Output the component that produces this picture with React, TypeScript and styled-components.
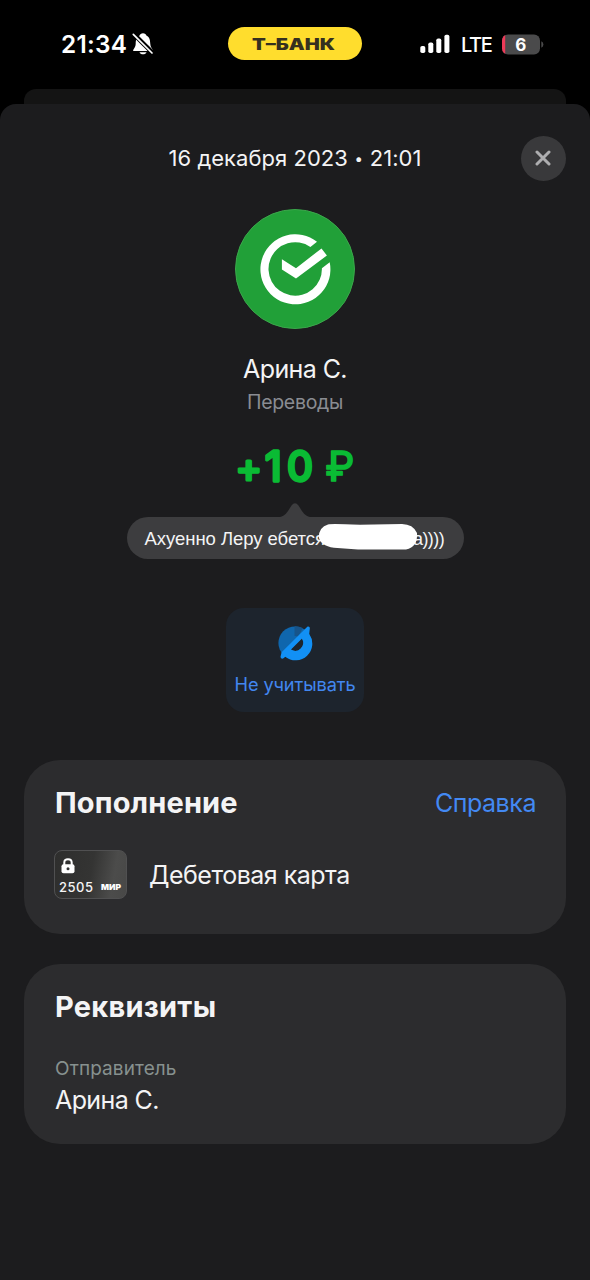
import React from 'react';
import styled, { createGlobalStyle } from 'styled-components';

const GlobalStyle = createGlobalStyle`
  * { box-sizing: border-box; }
  html, body { margin: 0; background: #000; }
  body { font-family: Inter, "Liberation Sans", sans-serif; color: #f4f4f5; }
  svg { display: block; flex: none; }
`;

const Screen = styled.main`
  width: 590px;
  height: 1280px;
  display: flex;
  flex-direction: column;
  overflow: hidden;
  background: #000;
`;

const StatusBar = styled.header`
  height: 89px;
  flex: none;
  display: grid;
  grid-template-columns: 228px 134px 228px;
  align-items: start;
`;

const StatusSide = styled.div<{ $pad: number }>`
  height: 88px;
  padding-left: ${(p) => p.$pad}px;
  display: flex;
  align-items: center;
`;

const Brand = styled.div`
  height: 33px;
  margin-top: 27px;
  border-radius: 17px;
  background: #ffdd2d;
  display: flex;
  align-items: center;
  justify-content: center;
`;

const BackSheet = styled.div`
  height: 15px;
  flex: none;
  margin: 0 24px;
  border-radius: 12px 12px 0 0;
  background: #141414;
`;

const Sheet = styled.section`
  flex: 1;
  border-radius: 16px 16px 0 0;
  background: #1c1c1e;
  display: flex;
  flex-direction: column;
  align-items: center;
`;

const Label = styled.span<{
  $size: number;
  $line: number;
  $weight?: number;
  $color?: string;
  $track?: number;
}>`
  display: block;
  white-space: nowrap;
  font-size: ${(p) => p.$size}px;
  line-height: ${(p) => p.$line}px;
  font-weight: ${(p) => p.$weight ?? 400};
  color: ${(p) => p.$color ?? '#f4f4f5'};
  letter-spacing: ${(p) => p.$track ?? 0}px;
`;

const BrandText = styled(Label)`
  transform: scaleX(1.27);
  padding: 2px 2px 0 0;
`;

const Network = styled(Label)`
  margin: 1px 11px 0 10px;
`;

const Dot = styled.span`
  font-size: 15px;
  vertical-align: 2px;
  margin: 0 0.5px;
`;

const TopRow = styled.div`
  width: 100%;
  height: 46px;
  margin-top: 31px;
  padding: 0 24px;
  display: grid;
  grid-template-columns: 46px 1fr 46px;
  align-items: center;
  justify-items: center;
`;

const CloseButton = styled.button`
  width: 45px;
  height: 45px;
  padding: 0;
  border: 0;
  border-radius: 50%;
  background: #39393b;
  display: grid;
  place-items: center;
`;

const Avatar = styled.div`
  width: 120px;
  height: 120px;
  flex: none;
  margin: 28px 0 24px;
  border-radius: 50%;
  border: 1px solid #3ba64b;
  background: #21a038;
`;

const Category = styled(Label)`
  margin-top: 4px;
`;

const Amount = styled.svg`
  margin-top: 17px;
`;

const Comment = styled.div`
  display: flex;
  flex-direction: column;
  align-items: center;
  margin-top: 10px;
`;

const Bubble = styled.div`
  position: relative;
  width: 337px;
  height: 42px;
  padding: 2px 0 0 18px;
  border-radius: 21px;
  background: #3d3d3f;
  display: flex;
  align-items: center;
  font-family: "Liberation Sans", Arial, sans-serif;
`;

const CommentTail = styled(Label)`
  margin-left: 88px;
`;

const Scribble = styled.svg`
  position: absolute;
  left: 191px;
  top: 6px;
`;

const Action = styled.button`
  width: 138px;
  height: 104px;
  flex: none;
  margin-top: 49px;
  padding: 17px 0 0;
  border: 0;
  border-radius: 18px;
  background: #1d242d;
  font-family: inherit;
  display: flex;
  flex-direction: column;
  align-items: center;
  gap: 11px;
`;

const Card = styled.article<{ $height: number; $top: number }>`
  width: 542px;
  height: ${(p) => p.$height}px;
  flex: none;
  margin-top: ${(p) => p.$top}px;
  padding: 25px 30px 0;
  border-radius: 36px;
  background: #2c2c2e;
`;

const CardHead = styled.div`
  display: flex;
  justify-content: space-between;
  align-items: center;
  height: 36px;
  padding-left: 1px;
`;

const Account = styled.div`
  display: flex;
  align-items: center;
  gap: 22px;
  margin-top: 28px;
  height: 50px;
`;

const AccountName = styled(Label)`
  padding-top: 2px;
`;

const BankCard = styled.div`
  width: 73px;
  height: 49px;
  padding: 7px 4px 0 4px;
  border-radius: 8px;
  border: 1px solid #505051;
  background: linear-gradient(100deg, #2e2e2d 0%, #343433 50%, #4c4c4b 80%, #484847 100%);
`;

const CardNumber = styled.div`
  display: flex;
  justify-content: space-between;
  align-items: center;
  margin-top: 5px;
`;

const Field = styled.div`
  display: grid;
  gap: 2px;
  margin-top: 31px;
  padding-left: 1px;
`;

const BellOff = () => (
  <svg width="22" height="24" viewBox="0 0 22 24" style={{ marginLeft: 5 }}>
    <path
      fill="#fff"
      d="M1 18.2C2 16.7 3.6 14.8 3.7 12C3.8 7.5 4.5 5.4 7.4 3.8C8 2 9.2 1.2 11 1.2C12.9 1.2 14 2.2 14.6 3.8C17.5 5.2 18.1 7.7 18.3 12C18.4 14.8 20 16.4 20.8 18.2Q21 19 20 19H2Q.8 19 1 18.2ZM7.5 20.2H14.5C13.6 23 8.4 23 7.5 20.2Z"
    />
    <path d="M1.8 2.2L21 21.2" stroke="#000" strokeWidth="4.6" />
    <path d="M1.3 2.4L20 21" stroke="#fff" strokeWidth="1.7" strokeLinecap="round" />
  </svg>
);

const Signal = () => (
  <svg width="31" height="20" viewBox="0 0 31 20" fill="#fff">
    <rect x="0.3" y="12" width="5" height="7" rx="1.8" />
    <rect x="8.3" y="8.5" width="5" height="10.5" rx="1.8" />
    <rect x="16.3" y="4.5" width="5" height="14.5" rx="1.8" />
    <rect x="24.4" y="0.7" width="5" height="18.3" rx="1.8" />
  </svg>
);

const Battery = () => (
  <svg width="42" height="21" viewBox="0 0 42 21">
    <defs>
      <clipPath id="level">
        <rect width="3.2" height="21" />
      </clipPath>
    </defs>
    <rect x="0" y="0.4" width="38" height="20.2" rx="6" fill="#4a4a4b" />
    <rect x="0" y="0.4" width="38" height="20.2" rx="6" fill="#ee3a58" clipPath="url(#level)" />
    <path d="M39.3 7.3Q41.4 8.2 41.4 10.5T39.3 13.7Z" fill="#4a4a4b" />
    <text x="18.7" y="16.6" textAnchor="middle" fontSize="17" fontWeight="700" fill="#fff">6</text>
  </svg>
);

const SberMark = () => (
  <svg width="118" height="118" viewBox="1 1 118 118">
    <path
      fill="#fff"
      d="M82 32.8A35 35 0 1 0 94.7 53.3L86.9 59.2A26.7 26.7 0 1 1 75.4 38Z"
    />
    <path fill="#fff" d="M46.9 50.3L61 59.2L86.5 39.4L91.9 46.6L61 69.6L46.9 60.5Z" />
  </svg>
);

const ExcludeIcon = () => (
  <svg width="36" height="36" viewBox="0 0 36 36">
    <circle cx="18" cy="18" r="16.6" fill="#0f66ad" />
    <path d="M17.5 1.4A16.6 16.6 0 0 1 25.6 3L21.4 11.8A7 7 0 0 0 17.5 11Z" fill="#17548a" />
    <path d="M24.9 13.6L13.9 24.6A8 8 0 0 0 24.9 13.6Z" fill="#1d242d" />
    <path
      fill="#1290f5"
      fillRule="evenodd"
      d="M30.3 1.8C31.7.9 33 2 32.8 3.6L32.2 9.1A16.6 16.6 0 0 1 8.3 31.7L6.5 33.3C5 34.3 3.2 33 3.6 31.2L4.6 27.3ZM24.9 13.6L13.9 24.6A8 8 0 0 0 24.9 13.6Z"
    />
  </svg>
);

const Lock = () => (
  <svg width="14" height="16" viewBox="0 0 14 16" style={{ marginLeft: 2 }}>
    <path d="M3.3 8V4.5Q3.3 1.2 7 1.2T10.7 4.5V8" fill="none" stroke="#fff" strokeWidth="2" />
    <rect x="0.5" y="6.3" width="13" height="9" rx="2" fill="#fff" />
    <circle cx="7" cy="10.7" r="1.5" fill="#333" />
  </svg>
);

const Mir = () => (
  <svg width="22" height="8" viewBox="0 0 22 8">
    <text x="1" y="7" fontSize="8" fontWeight="900" fill="#fff" textLength="20" lengthAdjust="spacingAndGlyphs">
      МИР
    </text>
  </svg>
);

export default function App() {
  return (
    <Screen>
      <GlobalStyle />
      <StatusBar>
        <StatusSide $pad={61}>
          <Label $size={24.3} $line={28} $weight={600} $color="#fff" $track={0.3}>21:34</Label>
          <BellOff />
        </StatusSide>
        <Brand>
          <BrandText $size={15.8} $line={18} $weight={900} $color="#35301f">Т–БАНК</BrandText>
        </Brand>
        <StatusSide $pad={58}>
          <Signal />
          <Network $size={20} $line={28} $weight={500} $color="#fff" $track={-1.4}>LTE</Network>
          <Battery />
        </StatusSide>
      </StatusBar>
      <BackSheet />
      <Sheet>
        <TopRow>
          <i />
          <Label $size={22} $line={28} $track={0.03}>
            16 декабря 2023 <Dot>•</Dot> 21:01
          </Label>
          <CloseButton aria-label="Закрыть">
            <svg width="16" height="16" viewBox="0 0 16 16">
              <path d="M2 2L14 14M14 2L2 14" stroke="#aeaeb0" strokeWidth="3" strokeLinecap="round" />
            </svg>
          </CloseButton>
        </TopRow>
        <Avatar>
          <SberMark />
        </Avatar>
        <Label $size={25} $line={32} $track={-0.6}>Арина С.</Label>
        <Category $size={19.5} $line={26} $color="#8a8c92" $track={-0.3}>Переводы</Category>
        <Amount width="130" height="60" viewBox="-5 -6 130 60">
          <g fill="#0abb34" stroke="#0abb34" strokeLinejoin="round">
            <text x="0.5" y="43.6" fontSize="40" fontWeight="400" strokeWidth="3.2">+</text>
            <text x="30 52" y="42.5" fontSize="41" fontWeight="400" strokeWidth="3.4">10</text>
            <text x="90.5" y="42.5" fontSize="41" fontWeight="400" strokeWidth="1.7">₽</text>
          </g>
        </Amount>
        <Comment>
          <svg width="30" height="15" viewBox="0 0 30 15">
            <path d="M0 15C6 14 8.5 8 11.5 3.5Q15-1 18.5 3.5C21.5 8 24 14 30 15Z" fill="#3d3d3f" />
          </svg>
          <Bubble>
            <Label $size={18.5} $line={24} $track={-0.05}>Ахуенно Леру ебется</Label>
            <CommentTail $size={18} $line={24} $track={-0.55}>а))))</CommentTail>
            <Scribble width="100" height="28" viewBox="0 0 100 28">
              <path
                fill="#fff"
                d="M10 1.4Q14 .6 42 1.8L84 1Q95 1.2 99 10Q100 24 88 26.6H40L16 24.8Q2 22.5 .8 14Q1 4 10 1.4Z"
              />
            </Scribble>
          </Bubble>
        </Comment>
        <Action>
          <ExcludeIcon />
          <Label $size={18.2} $line={24} $color="#4287f0" $track={-0.1}>Не учитывать</Label>
        </Action>
        <Card $height={174} $top={48}>
          <CardHead>
            <Label $size={29} $line={36} $weight={700} $track={0.15}>Пополнение</Label>
            <Label $size={25} $line={32} $color="#4389f3" $track={-0.45}>Справка</Label>
          </CardHead>
          <Account>
            <BankCard>
              <Lock />
              <CardNumber>
                <Label $size={13} $line={16} $weight={500} $track={0.5}>2505</Label>
                <Mir />
              </CardNumber>
            </BankCard>
            <AccountName $size={25} $line={32} $track={-0.5}>Дебетовая карта</AccountName>
          </Account>
        </Card>
        <Card $height={180} $top={30}>
          <CardHead>
            <Label $size={29} $line={36} $weight={700} $track={0.25}>Реквизиты</Label>
          </CardHead>
          <Field>
            <Label $size={19} $line={26} $color="#87918f" $track={0.1}>Отправитель</Label>
            <Label $size={25} $line={32} $track={-0.6}>Арина С.</Label>
          </Field>
        </Card>
      </Sheet>
    </Screen>
  );
}
